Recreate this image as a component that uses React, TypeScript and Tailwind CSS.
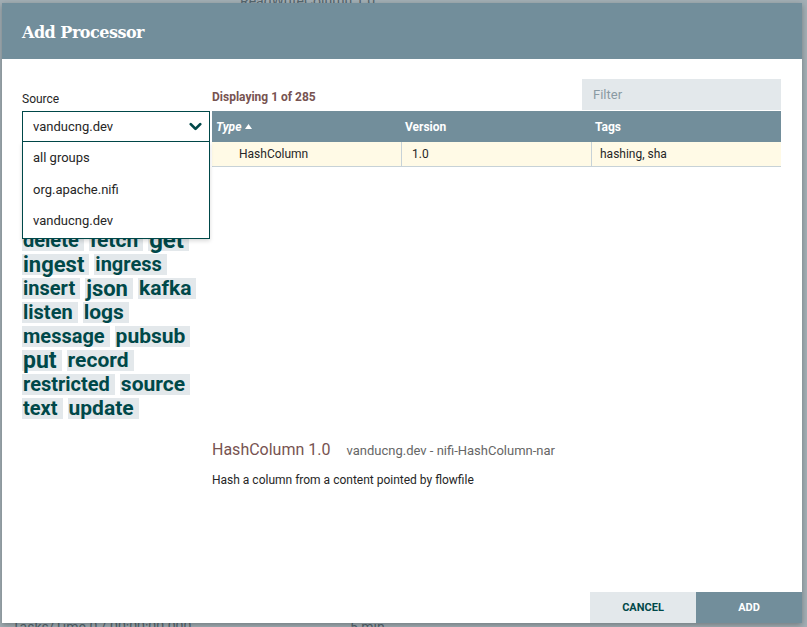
import { ChevronDown } from "lucide-react";

const cloudRows: [string, number][][] = [
  [["attributes", 19], ["avro", 20], ["csv", 20]],
  [["consume", 20], ["convert", 21]],
  [["database", 19], ["csv", 19], ["hash", 20]],
  [["delete", 20], ["fetch", 21], ["get", 24]],
  [["ingest", 22], ["ingress", 20]],
  [["insert", 20], ["json", 22], ["kafka", 21]],
  [["listen", 20], ["logs", 21]],
  [["message", 20], ["pubsub", 21]],
  [["put", 23], ["record", 21]],
  [["restricted", 20], ["source", 21]],
  [["text", 20], ["update", 21]],
];

const groups = ["all groups", "org.apache.nifi", "vanducng.dev"];

function TagCloud() {
  return (
    <div className="mt-[16px] flex flex-col gap-[3px]">
      {cloudRows.map((row, i) => (
        <div key={i} className="flex gap-[5px]">
          {row.map(([tag, size]) => (
            <span
              key={tag}
              style={{ fontSize: size }}
              className="h-[21px] bg-[#e3e8eb] pl-px pr-[5px] font-bold leading-[21px] text-[#004849]"
            >
              {tag}
            </span>
          ))}
        </div>
      ))}
    </div>
  );
}

export default function App() {
  return (
    <div
      className="relative h-[627px] w-[807px] overflow-hidden bg-[#a3afb5] pl-[2px] pt-[3px]"
      style={{ fontFamily: "Roboto, 'Noto Sans', sans-serif" }}
    >
      {/* canvas behind the dialog */}
      <span className="absolute left-[240px] top-[-9px] text-[14px] text-[#55666e]">ReadWriteColumn 1.0</span>
      <span className="absolute left-[12px] top-[617px] text-[14px] text-[#55666e]">Tasks/Time 0 / 00:00:00.000</span>
      <span className="absolute left-[350px] top-[617px] text-[14px] text-[#55666e]">5 min</span>

      <div className="relative flex h-[620px] w-[800px] flex-col bg-white shadow-[0_2px_6px_rgba(0,0,0,0.3)]">
        <div className="flex h-[56px] items-center bg-[#728e9b] px-[20px] pt-[3px]">
          <h1
            className="text-[16px] font-bold tracking-[-0.5px] text-white"
            style={{ fontFamily: "'DejaVu Serif', 'Liberation Serif', serif" }}
          >
            Add Processor
          </h1>
        </div>

        <div className="flex flex-1 gap-[2px] px-[20px] pt-[20px]">
          <div className="w-[188px] pt-[12px]">
            <div className="h-[16px] text-[12px] leading-[16px] text-[#262626]">Source</div>
            <div className="relative mt-[4px]">
              <div className="flex h-[31px] items-center justify-between border border-[#004849] pl-[10px] pr-[4px] text-[13px] text-[#262626]">
                <span>vanducng.dev</span>
                <ChevronDown size={19} strokeWidth={3.5} className="text-[#004849]" />
              </div>
              <div className="absolute left-0 top-[31px] z-10 w-full border border-t-0 border-[#004849] bg-white pb-px shadow-[0_2px_4px_rgba(0,0,0,0.15)]">
                {groups.map((g) => (
                  <div key={g} className="flex h-[31.5px] items-center pl-[10px] text-[13px] text-[#262626]">
                    {g}
                  </div>
                ))}
              </div>
            </div>
            <TagCloud />
          </div>

          <div className="w-[569px]">
            <div className="flex h-[32px] items-end justify-between">
              <span className="pb-[6px] text-[12px] font-bold leading-[16px] text-[#775351]">
                Displaying 1 of 285
              </span>
              <div className="flex h-[31px] w-[199px] items-center self-start bg-[#e3e8eb] pl-[11px] text-[13px] text-[#8a9aa3]">
                Filter
              </div>
            </div>

            <div className="h-[329px]">
              <div className="flex h-[31px] items-center bg-[#728e9b] text-[12px] font-bold text-white">
                <div className="flex w-[190px] items-center gap-[4px] pl-[4px] italic">
                  Type
                  <svg width="7" height="5" viewBox="0 0 7 5">
                    <path d="M0 5 L3.5 0 L7 5 Z" fill="white" />
                  </svg>
                </div>
                <div className="w-[190px] pl-[3px]">Version</div>
                <div className="flex-1 pl-[3px]">Tags</div>
              </div>
              <div className="flex h-[25px] border-b border-[#c7d2d7] bg-[#fffae6] text-[12px] text-[#262626]">
                <div className="flex w-[190px] items-center border-r border-[#c7d2d7] pl-[27px]">HashColumn</div>
                <div className="flex w-[190px] items-center border-r border-[#c7d2d7] pl-[10px]">1.0</div>
                <div className="flex flex-1 items-center pl-[8px]">hashing, sha</div>
              </div>
            </div>

            <div className="flex items-baseline gap-[16px]">
              <span className="text-[16px] leading-[20px] text-[#775351]">HashColumn 1.0</span>
              <span className="text-[13px] text-[#666666]">vanducng.dev - nifi-HashColumn-nar</span>
            </div>
            <p className="mt-[11px] text-[12px] leading-[16px] text-[#262626]">
              Hash a column from a content pointed by flowfile
            </p>
          </div>
        </div>

        <div className="flex justify-end">
          <button className="h-[31px] w-[106px] bg-[#e3e8eb] pt-px text-[11px] font-bold text-[#004849]">CANCEL</button>
          <button className="h-[31px] w-[106px] bg-[#728e9b] pt-px text-[11px] font-bold text-white">ADD</button>
        </div>
      </div>
    </div>
  );
}
